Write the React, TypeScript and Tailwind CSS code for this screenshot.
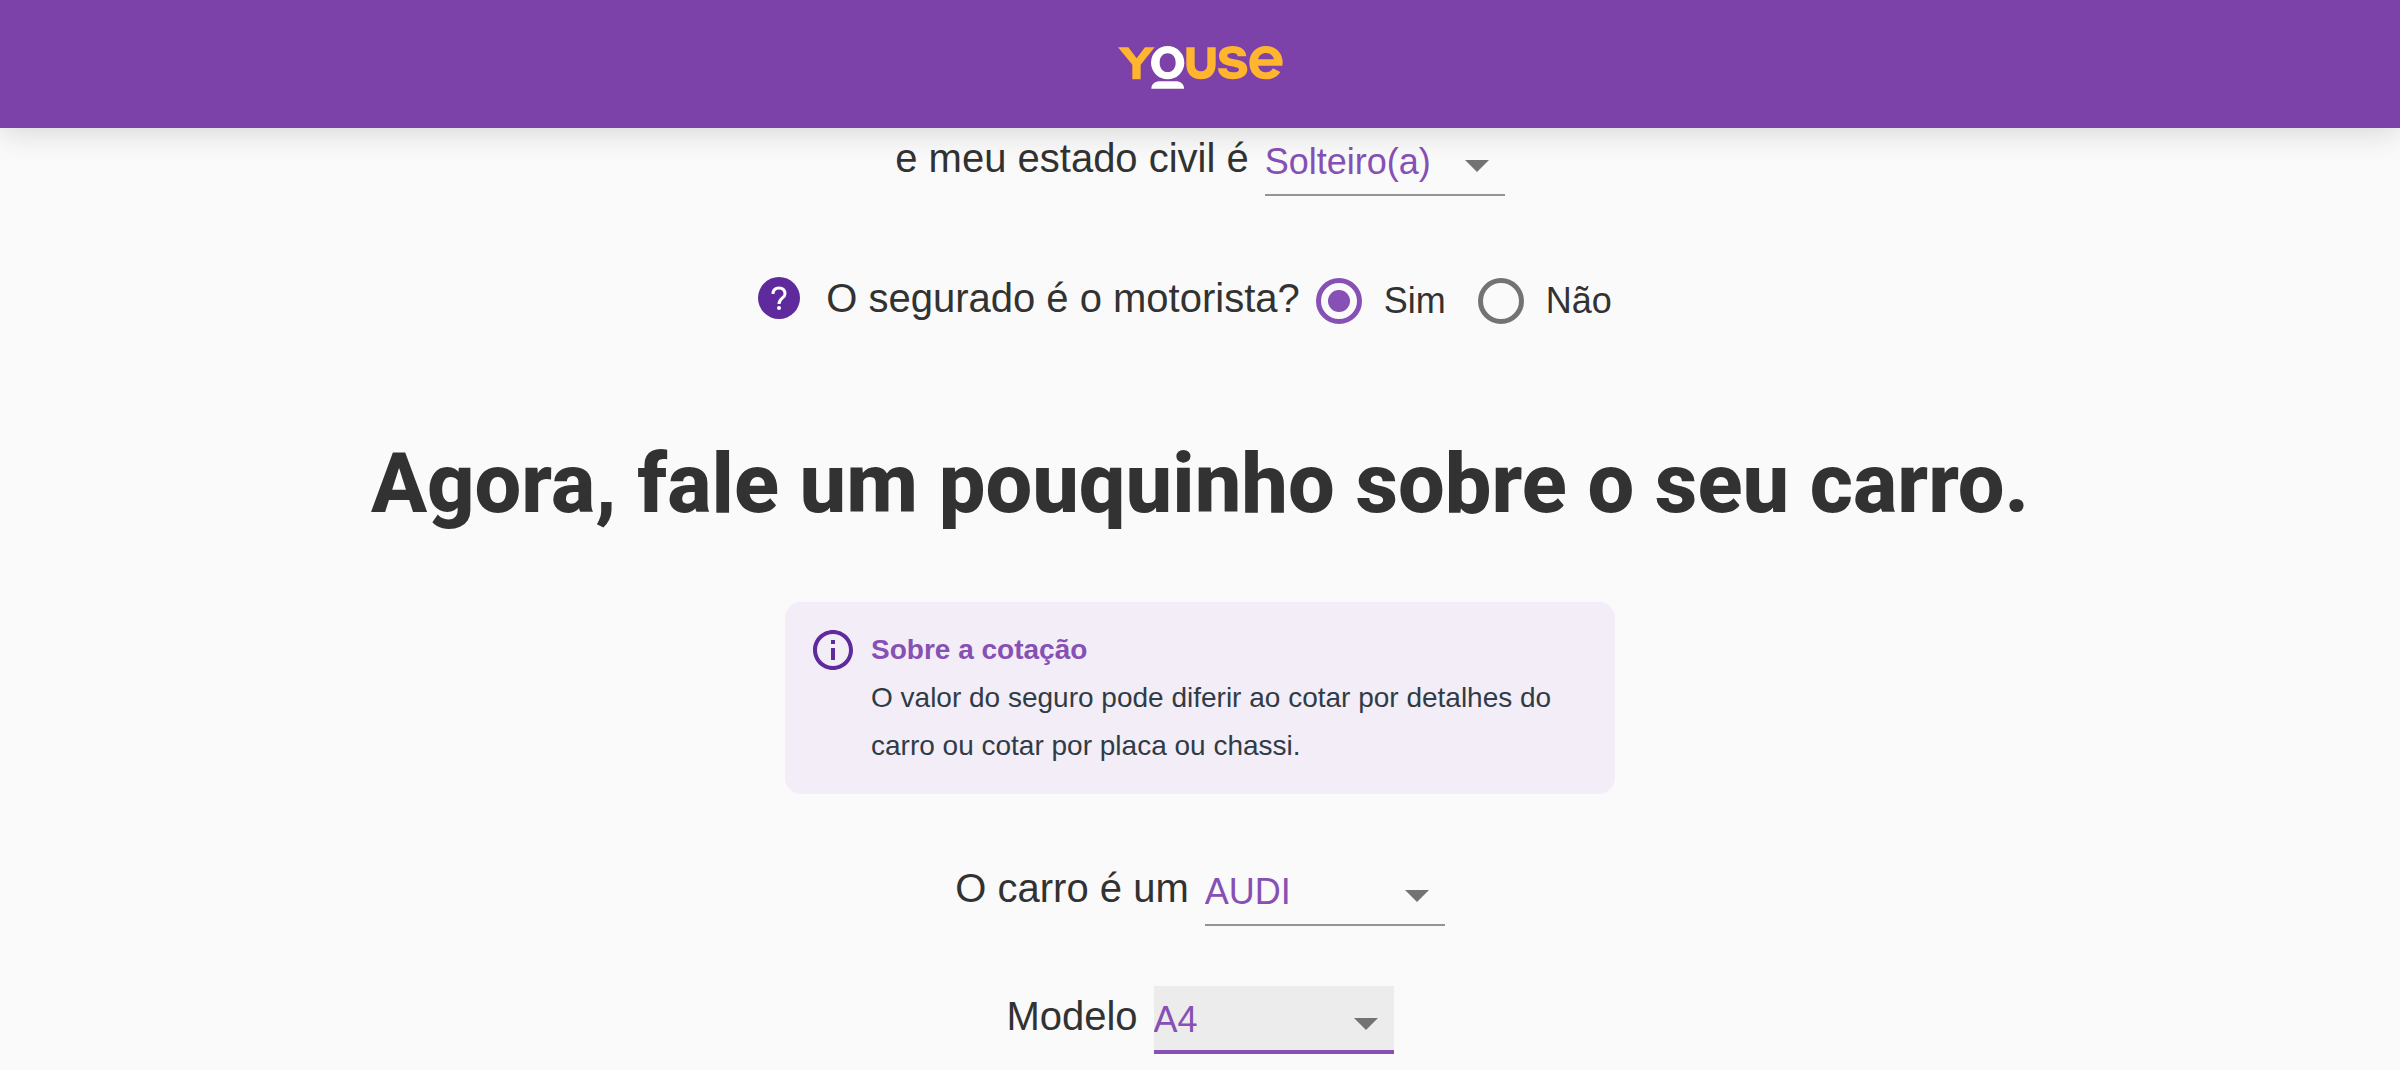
import { useId } from 'react';
import { MdOutlineInfo } from 'react-icons/md';

function YouseLogo() {
  return (
    <svg viewBox="113 77 495 129" className="h-[43px] w-[165px]" role="img" aria-label="Youse">
      <g fill="#ffb52e">
        <path d="M113 81H144L169 114L194 81H223L181 133V177H156V133Z" />
        <path d="M318 81H343V132C343 146 350 153 362 153S381 146 381 132V81H406V132C406 160 390 177 362 177S318 160 318 132Z" />
        <path d="M498 108H472C471 101 466 98 457 98C447 98 441 101 441 106C441 111 447 114 457 116C480 120 501 124 501 147C501 166 483 177 458 177C432 177 414 165 413 144H439C440 152 446 156 458 156C470 156 476 153 476 148C476 142 468 141 453 138C432 134 416 127 416 107C416 88 433 77 457 77C481 77 497 89 498 108Z" />
        <path
          fillRule="evenodd"
          d="M606 136H533C536 149 545 156 558 156C568 156 574 151 578 144L600 155C592 169 577 177 557 177C527 177 507 157 507 127C507 98 528 77 557 77C586 77 607 97 607 127ZM533 117H581C577 104 569 98 557 98C545 98 536 105 533 117Z"
        />
      </g>
      <g fill="#fff">
        <path
          fillRule="evenodd"
          d="M262 77A50 50 0 1 1 262 177A50 50 0 1 1 262 77ZM262 99C247 99 238 111 238 127S247 155 262 155S286 143 286 127S277 99 262 99Z"
        />
        <path d="M213 205C213 191 224 183 240 183H285C301 183 311 191 311 205Z" />
      </g>
    </svg>
  );
}

type SelectRowProps = {
  label: string;
  options: string[];
  active?: boolean;
};

function SelectRow({ label, options, active = false }: SelectRowProps) {
  const id = useId();
  return (
    <div className="flex h-[68px] items-start justify-center gap-4">
      <label htmlFor={id} className="pt-1.5 text-[40px] leading-[48px]">
        {label}
      </label>
      <div
        className={
          active
            ? 'relative h-full w-60 border-b-4 border-[#8650b4] bg-[#ececec]'
            : 'relative h-full w-60 border-b-2 border-[#949494]'
        }
      >
        <select
          id={id}
          className="h-16 w-full appearance-none pt-1 pr-12 text-4xl text-[#8650b4] outline-none"
        >
          {options.map((option) => (
            <option key={option}>{option}</option>
          ))}
        </select>
        <svg viewBox="0 0 24 12" className="pointer-events-none absolute top-8 right-4 h-3 w-6">
          <path d="M0 0H24L12 12Z" fill="#737373" />
        </svg>
      </div>
    </div>
  );
}

function RadioOption({ label, checked = false }: { label: string; checked?: boolean }) {
  return (
    <label className="flex items-center gap-[22px] text-4xl">
      <input
        type="radio"
        name="motorista"
        defaultChecked={checked}
        className="grid size-[46px] appearance-none place-items-center rounded-full border-5 border-[#737373] before:size-[22px] before:rounded-full checked:border-[#8650b4] checked:before:bg-[#8650b4]"
      />
      {label}
    </label>
  );
}

export default function App() {
  return (
    <div className="min-h-screen bg-[#fafafa] font-['Liberation_Sans',Arial,sans-serif] text-[#323232]">
      <header className="sticky top-0 z-10 flex h-32 items-center justify-center bg-[#7d41aa] shadow-[0_4px_30px_rgba(0,0,0,0.15)]">
        <a href="#inicio" aria-label="Youse" className="pt-1.5">
          <YouseLogo />
        </a>
      </header>

      <main className="flex flex-col items-center">
        <SelectRow label="e meu estado civil é" options={['Solteiro(a)', 'Casado(a)', 'Divorciado(a)']} />

        <fieldset className="mt-[72px] flex h-[68px] items-start pr-[30px]">
          <button
            type="button"
            aria-label="Ajuda"
            className="mt-[9px] mr-[26px] size-[42px] rounded-full bg-[#5f2a9b]"
          >
            <svg viewBox="0 0 42 42" className="size-full" fill="none" stroke="#fff" strokeWidth="3">
              <path d="M15 17C15 13 17 11 21 11S27 13 27 17C27 21 21 21 21 27" />
              <circle cx="21" cy="31" r="2" fill="#fff" stroke="none" />
            </svg>
          </button>
          <span className="mr-4 pt-1.5 text-[40px] leading-[48px]">O segurado é o motorista?</span>
          <div className="flex gap-8 pt-2.5">
            <RadioOption label="Sim" checked />
            <RadioOption label="Não" />
          </div>
        </fieldset>

        <h1 className="mt-[100px] font-[Roboto] text-[83px] leading-[96px] font-extrabold">
          Agora, fale um pouquinho sobre o seu carro.
        </h1>

        <section className="mt-[70px] flex w-full max-w-[830px] gap-3.5 rounded-2xl bg-[#f3edf8] p-6">
          <MdOutlineInfo className="size-12 shrink-0 text-[#5f2a9b]" />
          <div className="text-[28px] leading-[48px]">
            <h2 className="font-bold text-[#8650b4]">Sobre a cotação</h2>
            <p className="text-[#303c45]">
              O valor do seguro pode diferir ao cotar por detalhes do carro ou cotar por placa ou chassi.
            </p>
          </div>
        </section>

        <form className="mt-16 flex flex-col gap-[60px] pb-4">
          <SelectRow label="O carro é um" options={['AUDI', 'BMW', 'FIAT']} />
          <SelectRow label="Modelo" options={['A4', 'A3', 'Q5']} active />
        </form>
      </main>
    </div>
  );
}
